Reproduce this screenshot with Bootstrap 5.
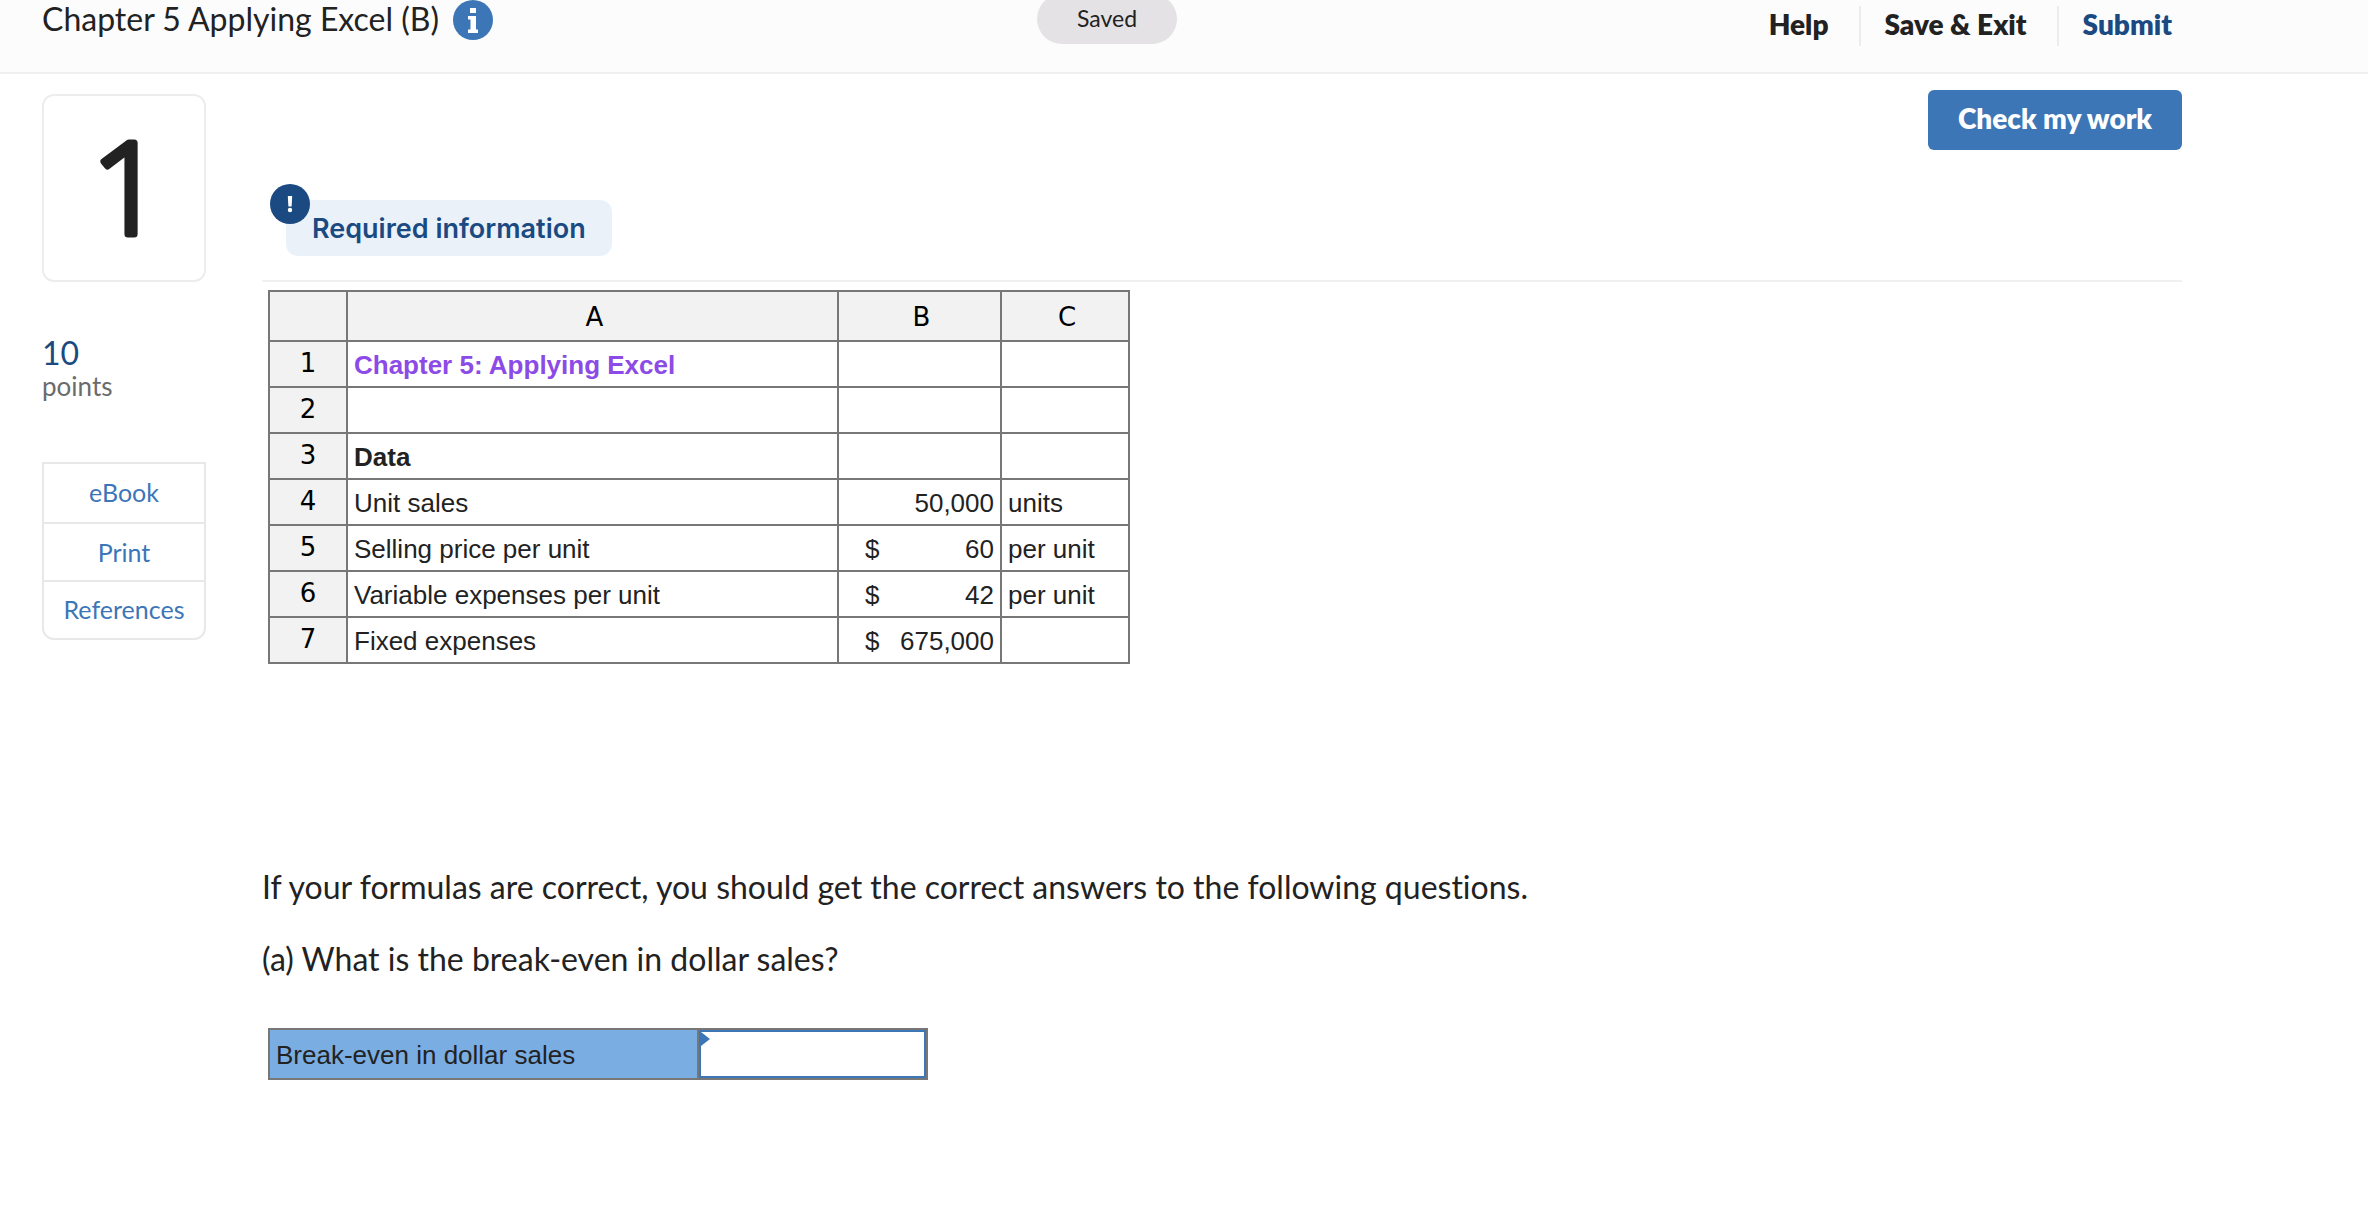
<!DOCTYPE html>
<html lang="en">
<head>
<meta charset="utf-8">
<meta name="viewport" content="width=device-width, initial-scale=1">
<title>Chapter 5 Applying Excel (B)</title>
<link href="https://cdn.jsdelivr.net/npm/bootstrap@5.3.0/dist/css/bootstrap.min.css" rel="stylesheet">
<style>
  :root { --ink: #222; --navy: #1b4a82; --blue: #3c76b7; --line: #ececec; --grid: #777; }
  body { font-family: Lato, "Open Sans", sans-serif; color: var(--ink); font-size: 32px; background: #fff; font-variant-ligatures: none; }
  a { text-decoration: none; }
  .topbar { height: 74px; background: #fcfcfc; border-bottom: 2px solid #f0f0f0; padding: 0 196px 0 42px; }
  .side { flex: 1 1 0; }
  .title-row { gap: 14px; }
  .page-title { font-size: 32px; line-height: 38px; font-weight: 400; }
  .saved-pill { width: 140px; height: 50px; margin-top: -6px; border-radius: 25px; background: #e4e2e5; font-size: 23px; line-height: 48px; }
  .top-links { padding-top: 6px; }
  .top-links a { font-size: 28px; height: 40px; line-height: 36px; font-weight: 800; color: var(--ink); padding: 0 30px 0 24px; border-right: 2px solid var(--line); }
  .top-links a:last-child { color: var(--navy); border: 0; padding-right: 0; }
  .page-body { padding: 16px 186px 0 42px; gap: 56px; }
  .rail { width: 164px; }
  .qnum { height: 188px; border: 2px solid #ededed; border-radius: 12px; }
  .qnum text { font-family: "Open Sans", sans-serif; font-size: 128px; font-weight: 300; fill: var(--ink); stroke: var(--ink); stroke-width: 7px; stroke-linejoin: round; }
  .pts { margin-top: 52px; color: var(--navy); line-height: 38px; font-size: 32px; }
  .pts-label { color: #6b6b6b; font-size: 26px; line-height: 28px; }
  .tools { margin-top: 62px; border: 2px solid #e8e8e8; border-radius: 0 0 12px 12px; }
  .tools a { font-size: 25px; line-height: 56px; height: 58px; color: var(--blue); border-bottom: 2px solid #e8e8e8; }
  .tools a:first-child { height: 60px; }
  .tools a:last-child { border: 0; line-height: 54px; height: 56px; }
  .btn-check-work, .btn-check-work:hover { height: 60px; padding: 0 30px 4px; border: 0; border-radius: 6px; background: var(--blue); color: #fff; font-size: 28px; font-weight: 800; line-height: 54px; }
  .req { margin: 50px 0 24px 24px; height: 56px; padding: 0 26px; border-radius: 12px; background: #eaf1f9; color: var(--navy); font: 600 27px/58px Inter, sans-serif; }
  .req svg { position: absolute; left: -16px; top: -16px; }
  .rule { height: 2px; background: #f0f0f0; }
  .sheet { font: 26px/30px "Liberation Sans", Arial, sans-serif; border-collapse: collapse; margin: 8px 0 0 6px; table-layout: fixed; width: 862px; color: var(--ink); }
  .sheet th, .sheet td { border: 2px solid var(--grid); padding: 2px 6px 0; height: 46px; }
  .sheet thead th, .sheet tbody th { background: #f2f2f2; color: #000; font: 26px/30px "DejaVu Sans", Verdana, sans-serif; text-align: center; padding: 0 6px 2px; }
  .sheet thead th { height: 50px; padding: 2px 6px 0 10px; }
  .sheet .dollar { padding-left: 20px; }
  .sheet .chapter { color: #8c4be6; }
  .ask { margin-top: 199px; line-height: 48px; }
  .ask p { margin-bottom: 24px; }
  .answer { margin: 45px 0 0 6px; width: 660px; height: 52px; border: 2px solid var(--grid); font: 26px/48px "Liberation Sans", Arial, sans-serif; }
  .answer label { width: 429px; padding: 2px 6px 0; line-height: 46px; background: #7aade2; border-right: 2px solid var(--grid); }
  .answer input { min-width: 0; border: 2px solid var(--blue); border-radius: 0; padding: 0 12px; outline: 0; }
  .answer svg { position: absolute; left: 2px; top: 2px; }
</style>
<script src="https://cdn.jsdelivr.net/npm/bootstrap@5.3.0/dist/js/bootstrap.bundle.min.js"></script>
</head>
<body>
<header class="topbar d-flex align-items-start">
  <div class="side title-row d-flex align-items-start">
    <h1 class="page-title m-0">Chapter 5 Applying Excel (B)</h1>
    <button class="btn p-0 border-0 d-flex" type="button" aria-label="Assignment information">
      <svg width="40" height="40" viewBox="0 0 40 40"><circle cx="20" cy="20" r="20" fill="#3c76b7"/><path fill="#fff" d="M17 8h6v5h-6zM15 16h8v13.500h2V33H15v-3.500h2.500v-10H15z"/></svg>
    </button>
  </div>
  <div class="saved-pill text-center" role="status">Saved</div>
  <nav class="side top-links d-flex justify-content-end" aria-label="Assignment">
    <a href="#">Help</a><a href="#">Save &amp; Exit</a><a href="#">Submit</a>
  </nav>
</header>
<div class="page-body d-flex">
  <aside class="rail flex-shrink-0 pt-1">
    <div class="qnum"><svg class="d-block mx-auto" width="160" height="184" viewBox="0 0 160 184"><text x="84" y="138" text-anchor="middle">1</text></svg></div>
    <div class="pts">10</div>
    <div class="pts-label">points</div>
    <nav class="tools d-flex flex-column text-center" aria-label="Question tools">
      <a href="#">eBook</a><a href="#">Print</a><a href="#">References</a>
    </nav>
  </aside>
  <main class="flex-grow-1">
    <div class="d-flex justify-content-end"><button class="btn btn-check-work" type="button">Check my work</button></div>
    <div class="d-flex"><div class="req position-relative">
      <svg width="40" height="40" viewBox="0 0 40 40" aria-hidden="true"><circle cx="20" cy="20" r="20" fill="#1b4a82"/><path fill="#fff" d="M17.800 12h4.400l-.6 10.500h-3.200z"/><circle cx="20" cy="26" r="2.200" fill="#fff"/></svg>
      Required information
    </div></div>
    <div class="rule"></div>
    <table class="sheet">
      <colgroup><col style="width:78px"><col style="width:491px"><col style="width:163px"><col></colgroup>
      <thead><tr><th></th><th scope="col">A</th><th scope="col">B</th><th scope="col">C</th></tr></thead>
      <tbody>
        <tr><th scope="row">1</th><td class="fw-bold chapter">Chapter 5: Applying Excel</td><td></td><td></td></tr>
        <tr><th scope="row">2</th><td></td><td></td><td></td></tr>
        <tr><th scope="row">3</th><td class="fw-bold">Data</td><td></td><td></td></tr>
        <tr><th scope="row">4</th><td>Unit sales</td><td class="text-end">50,000</td><td>units</td></tr>
        <tr><th scope="row">5</th><td>Selling price per unit</td><td><div class="d-flex justify-content-between dollar"><span>$</span><span>60</span></div></td><td>per unit</td></tr>
        <tr><th scope="row">6</th><td>Variable expenses per unit</td><td><div class="d-flex justify-content-between dollar"><span>$</span><span>42</span></div></td><td>per unit</td></tr>
        <tr><th scope="row">7</th><td>Fixed expenses</td><td><div class="d-flex justify-content-between dollar"><span>$</span><span>675,000</span></div></td><td></td></tr>
      </tbody>
    </table>
    <div class="ask">
      <p>If your formulas are correct, you should get the correct answers to the following questions.</p>
      <p>(a) What is the break-even in dollar sales?</p>
    </div>
    <div class="answer d-flex">
      <label class="flex-shrink-0" for="breakeven">Break-even in dollar sales</label>
      <div class="position-relative flex-grow-1 d-flex">
        <input id="breakeven" class="w-100" type="text">
        <svg width="9" height="14" viewBox="0 0 9 14" aria-hidden="true"><path d="M0 0l9 7-9 7z" fill="#3c76b7"/></svg>
      </div>
    </div>
  </main>
</div>
</body>
</html>
